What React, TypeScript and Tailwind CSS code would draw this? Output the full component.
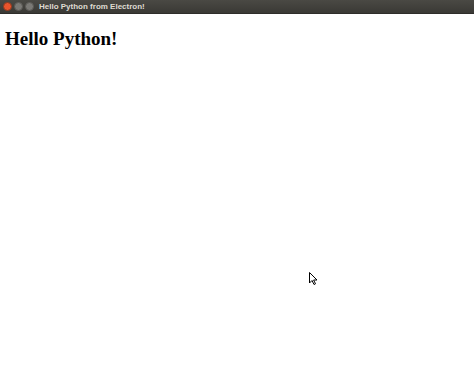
export default function App() {
  return (
    <div className="relative w-[474px] h-[370px] bg-white overflow-hidden">
      <div className="h-[14px] flex items-center gap-[2px] px-[3px] bg-gradient-to-b from-[#4a4944] to-[#3a3935] border-b border-[#2e2d2a]">
        <span className="w-[9px] h-[9px] rounded-full bg-[#e9542c] border border-[#8a3a20]" />
        <span className="w-[9px] h-[9px] rounded-full bg-[#7a7975] border border-[#5a5955]" />
        <span className="w-[9px] h-[9px] rounded-full bg-[#7a7975] border border-[#5a5955]" />
        <span className="ml-[3px] text-[8px] leading-none font-bold text-[#dfdbd2] font-['Liberation_Sans',sans-serif]">
          Hello Python from Electron!
        </span>
      </div>
      <h1 className="mt-[13px] ml-[5px] text-[19px] leading-[23px] font-bold text-black font-['Liberation_Serif',serif]">
        Hello Python!
      </h1>
      <svg className="absolute left-[309px] top-[272px]" width="10" height="14" viewBox="0 0 10 14">
        <path d="M0.5 0.5 L0.5 11 L3 8.5 L5 12.5 L6.5 11.8 L4.6 8 L8 8 Z" fill="white" stroke="black" strokeWidth="1" />
      </svg>
    </div>
  );
}
